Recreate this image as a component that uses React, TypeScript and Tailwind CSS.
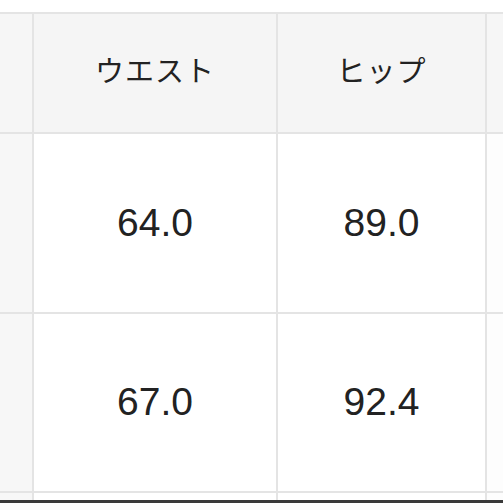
const ROWS = [
  ['64.0', '89.0'],
  ['67.0', '92.4'],
];

export default function App() {
  return (
    <div
      className="w-[503px] h-[503px] overflow-hidden bg-white text-[#222]"
      style={{ fontFamily: '"Liberation Sans", "Noto Sans CJK JP", sans-serif' }}
    >
      <div className="h-[12px]" />
      <div className="grid grid-cols-[32px_242px_207px_16px] grid-rows-[118px_178px_177px_7px] gap-[2px] pt-[2px] bg-[#e4e4e4]">
        <div className="bg-[#f6f6f6]" />
        <div className="bg-[#f5f5f5] flex items-center justify-center text-[29px] tracking-[1px]">ウエスト</div>
        <div className="bg-[#f5f5f5] flex items-center justify-center text-[29px] tracking-[1px]">ヒップ</div>
        <div className="bg-[#f6f6f6]" />
        {ROWS.map(([w, h]) => (
          <>
            <div key={w + 'a'} className="bg-[#f7f7f7]" />
            <div key={w + 'b'} className="bg-white flex items-center justify-center text-[39px]">{w}</div>
            <div key={w + 'c'} className="bg-white flex items-center justify-center text-[39px]">{h}</div>
            <div key={w + 'd'} className="bg-[#fdfdfd]" />
          </>
        ))}
        <div className="bg-[#f7f7f7]" />
        <div className="bg-white" />
        <div className="bg-white" />
        <div className="bg-[#fdfdfd]" />
      </div>
      <div className="h-[4px] bg-[#3a3a3a]" />
    </div>
  );
}
